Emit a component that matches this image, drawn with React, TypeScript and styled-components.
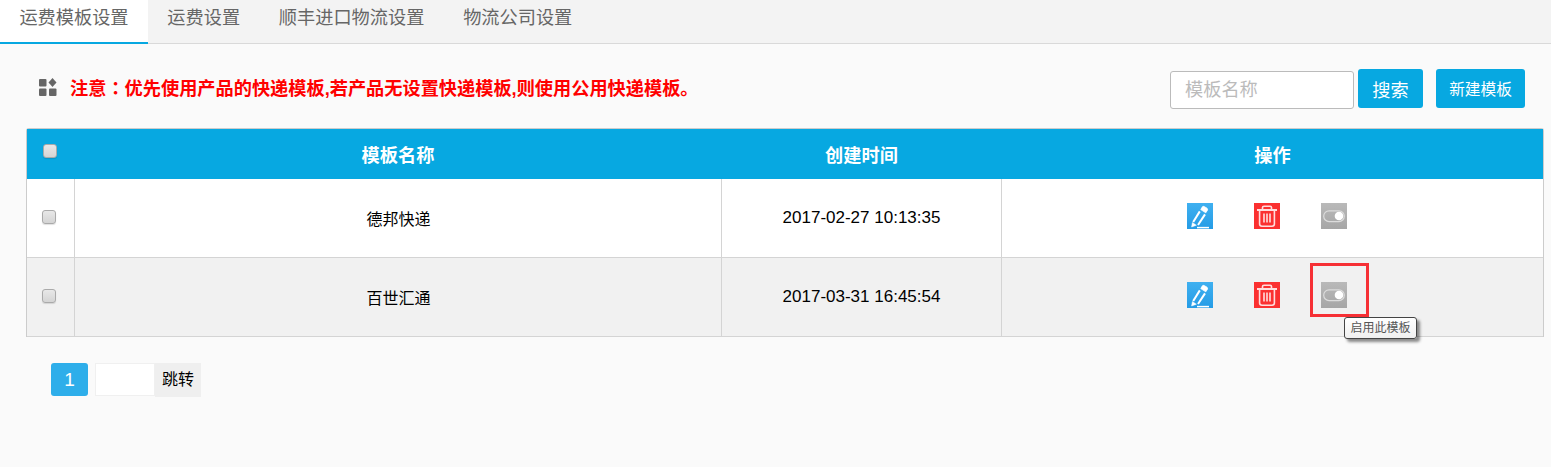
import React from "react";
import styled, { createGlobalStyle } from "styled-components";

const CJK = `"Liberation Sans", "Noto Sans CJK SC", sans-serif`;

const Global = createGlobalStyle`
  html, body { margin: 0; padding: 0; background: #fafafa; }
  body { font-family: ${CJK}; color: #000; }
  * { box-sizing: border-box; }
`;

const Page = styled.div`
  width: 1551px;
  height: 467px;
  overflow: hidden;
  background: #fafafa;
`;

const TabBar = styled.nav`
  display: flex;
  height: 44px;
  background: #f3f3f3;
  border-bottom: 1px solid #d9d9d9;
`;

const Tab = styled.div<{ $active?: boolean }>`
  height: 44px;
  padding: 0 19.4px;
  font-size: 18.2px;
  line-height: 37px;
  color: #666;
  background: ${(p) => (p.$active ? "#fff" : "transparent")};
  border-bottom: ${(p) => (p.$active ? "2px solid #07a8e1" : "none")};
`;

const Content = styled.main`
  padding: 25px 7px 0 26px;
`;

const NoticeRow = styled.div`
  display: flex;
  align-items: flex-start;
  justify-content: space-between;
  height: 39px;
  padding-right: 19px;
`;

const Notice = styled.div`
  display: flex;
  align-items: center;
  gap: 13px;
  padding: 5px 0 0 13px;
  height: 31px;
  font-size: 18.2px;
  font-weight: 700;
  color: #f00;
`;

const NoticeText = styled.span`
  white-space: nowrap;
`;

const Colon = styled.span`
  font-family: "Noto Sans CJK TC", sans-serif;
`;

const Controls = styled.div`
  display: flex;
  align-items: flex-start;
`;

const SearchInput = styled.input`
  width: 184px;
  height: 38px;
  margin: 2px 4px 0 0;
  padding: 0 14px;
  border: 1px solid #bbb;
  border-radius: 3px;
  background: #fff;
  font: 18.2px ${CJK};
  outline: none;
  &::placeholder { color: #bbb; opacity: 1; }
`;

const Action = styled.button<{ $small?: boolean; $w: number }>`
  width: ${(p) => p.$w}px;
  height: 39px;
  margin-left: ${(p) => (p.$small ? 13 : 0)}px;
  padding: 0;
  border: none;
  border-radius: 3px;
  background: #07a8e1;
  color: #fff;
  font: ${(p) => (p.$small ? 15.7 : 18.2)}px ${CJK};
`;

const Table = styled.table`
  width: 1518px;
  margin-top: 20px;
  table-layout: fixed;
  border-collapse: separate;
  border-spacing: 0;
  border-top: 1px solid #ccc;
  border-left: 1px solid #ccc;
  border-right: 1px solid #ccc;
  border-radius: 3px 3px 0 0;
`;

const HeadCell = styled.th`
  height: 50px;
  padding: 0 0 0 1px;
  background: #07a8e1;
  color: #fff;
  font-size: 18.2px;
  font-weight: 700;
  text-align: center;
`;

const HeadCheckCell = styled(HeadCell)`
  text-align: left;
  padding: 0 0 6px 16px;
`;

const Row = styled.tr<{ $alt?: boolean }>`
  background: ${(p) => (p.$alt ? "#f1f1f1" : "#fff")};
`;

const Cell = styled.td`
  height: 79px;
  padding: 0 0 1px 1px;
  border-bottom: 1px solid #d4d4d4;
  border-left: 1px solid #d4d4d4;
  font-size: 16px;
  text-align: center;
`;

const TimeCell = styled(Cell)`
  font-size: 17px;
  padding: 0 0 1px;
`;

const CheckCell = styled(Cell)`
  border-left: none;
  text-align: left;
  padding-left: 15px;
  padding-bottom: 3px;
`;

const ActionCell = styled(Cell)`
  vertical-align: top;
  padding: 24px 0 0 185px;
`;

const IconRow = styled.div`
  position: relative;
  display: flex;
  gap: 41px;
`;

const IconBox = styled.span<{ $bg: string }>`
  display: block;
  width: 26px;
  height: 26px;
  background: ${(p) => p.$bg};
`;

const Check = styled.input.attrs({ type: "checkbox" })`
  appearance: none;
  display: block;
  width: 14px;
  height: 14px;
  margin: 0;
  border: 1px solid #aaa;
  border-radius: 3px;
  background: linear-gradient(#e8e8e8, #d4d4d4);
  box-shadow: 0 1px 1px rgba(0, 0, 0, 0.12);
`;

const Highlight = styled.div`
  position: absolute;
  left: 123px;
  top: -19px;
  width: 59px;
  height: 54px;
  border: 3px solid #f63035;
`;

const Tip = styled.div`
  position: absolute;
  left: 157px;
  top: 35px;
  width: 73px;
  height: 22px;
  border: 1px solid #444;
  border-radius: 3px;
  background: linear-gradient(#fff, #f0f0f0);
  box-shadow: 3px 3px 3px rgba(0, 0, 0, 0.45);
  color: #555;
  font-size: 12px;
  line-height: 20px;
  text-align: center;
  white-space: nowrap;
`;

const Pager = styled.div`
  display: flex;
  align-items: flex-start;
  margin: 26px 0 0 25px;
`;

const PageNum = styled.div`
  width: 37px;
  height: 33px;
  margin-right: 7px;
  border-radius: 3px;
  background: #2eaeea;
  color: #fff;
  font-size: 19px;
  line-height: 33px;
  text-align: center;
`;

const PageInput = styled.input`
  width: 60px;
  height: 33px;
  padding: 0;
  border: 1px solid #f0f0f0;
  background: #fff;
  outline: none;
`;

const Jump = styled.div`
  width: 46px;
  height: 34px;
  background: #efefef;
  font-size: 16px;
  line-height: 34px;
  text-align: center;
`;

const Grid = () => (
  <svg width="18" height="18" viewBox="0 0 18 18" fill="#666">
    <rect x="0" y="1" width="7.5" height="7.5" rx="1" />
    <path d="M13.5 0 L17.5 4.5 L13.5 9 L9.5 4.5 Z" />
    <rect x="0" y="10.5" width="7.5" height="7.5" rx="1" />
    <rect x="10" y="10.5" width="7.5" height="7.5" rx="1" />
  </svg>
);

const Pencil = () => (
  <IconBox $bg="linear-gradient(#3fb0f0, #259ce6)">
    <svg width="26" height="26" viewBox="0 0 26 26" fill="none" stroke="#fff">
      <path d="M13.8 6.6 L15.4 3.8 Q16 3 17.2 3.6 L20 5.2 Q21 6 20.4 7.2 L18.8 9.8 Z" fill="#fff" strokeWidth="0.8" strokeLinejoin="round" />
      <path d="M12.8 8.4 L6.2 19" strokeWidth="2" />
      <path d="M18 11.4 L11 22" strokeWidth="2" />
      <path d="M4.6 24 L5.4 19.6 L9.4 22.2 Z" fill="#fff" strokeWidth="0.5" />
      <path d="M10 24.6 H22" strokeWidth="1.5" />
    </svg>
  </IconBox>
);

const Trash = () => (
  <IconBox $bg="#fb3030">
    <svg width="26" height="26" viewBox="0 0 26 26" fill="none" stroke="#ffdcdc" strokeWidth="1.6">
      <path d="M3 7 H23" strokeWidth="2" />
      <path d="M8.5 6.5 V4.6 Q8.5 3.2 10 3.2 H16 Q17.5 3.2 17.5 4.6 V6.5" />
      <path d="M5.6 7 V21 Q5.6 23.2 8 23.2 H18 Q20.4 23.2 20.4 21 V7" />
      <path d="M10 10.5 V19.5 M13 10.5 V19.5 M16 10.5 V19.5" />
    </svg>
  </IconBox>
);

const Toggle = () => (
  <IconBox $bg="linear-gradient(#b9b9b9, #a6a6a6)">
    <svg width="26" height="26" viewBox="0 0 26 26">
      <rect x="2.7" y="7.8" width="20.6" height="10.8" rx="5.4" fill="none" stroke="#dcdcdc" strokeWidth="1.2" />
      <circle cx="18" cy="13" r="4.3" fill="#fff" />
    </svg>
  </IconBox>
);

const rows = [
  { name: "德邦快递", time: "2017-02-27 10:13:35" },
  { name: "百世汇通", time: "2017-03-31 16:45:54" },
];

export default function App() {
  return (
    <Page>
      <Global />
      <TabBar>
        <Tab $active>运费模板设置</Tab>
        <Tab>运费设置</Tab>
        <Tab>顺丰进口物流设置</Tab>
        <Tab>物流公司设置</Tab>
      </TabBar>
      <Content>
        <NoticeRow>
          <Notice>
            <Grid />
            <NoticeText>
              注意<Colon>：</Colon>优先使用产品的快递模板,若产品无设置快递模板,则使用公用快递模板。
            </NoticeText>
          </Notice>
          <Controls>
            <SearchInput placeholder="模板名称" />
            <Action $w={65}>搜索</Action>
            <Action $w={89} $small>新建模板</Action>
          </Controls>
        </NoticeRow>
        <Table>
          <colgroup>
            <col style={{ width: 47 }} />
            <col style={{ width: 647 }} />
            <col style={{ width: 280 }} />
            <col />
          </colgroup>
          <thead>
            <tr>
              <HeadCheckCell><Check /></HeadCheckCell>
              <HeadCell>模板名称</HeadCell>
              <HeadCell>创建时间</HeadCell>
              <HeadCell>操作</HeadCell>
            </tr>
          </thead>
          <tbody>
            {rows.map((r, i) => (
              <Row key={r.name} $alt={i === 1}>
                <CheckCell><Check /></CheckCell>
                <Cell>{r.name}</Cell>
                <TimeCell>{r.time}</TimeCell>
                <ActionCell>
                  <IconRow>
                    <Pencil />
                    <Trash />
                    <Toggle />
                    {i === 1 && <Highlight />}
                    {i === 1 && <Tip>启用此模板</Tip>}
                  </IconRow>
                </ActionCell>
              </Row>
            ))}
          </tbody>
        </Table>
        <Pager>
          <PageNum>1</PageNum>
          <PageInput />
          <Jump>跳转</Jump>
        </Pager>
      </Content>
    </Page>
  );
}
